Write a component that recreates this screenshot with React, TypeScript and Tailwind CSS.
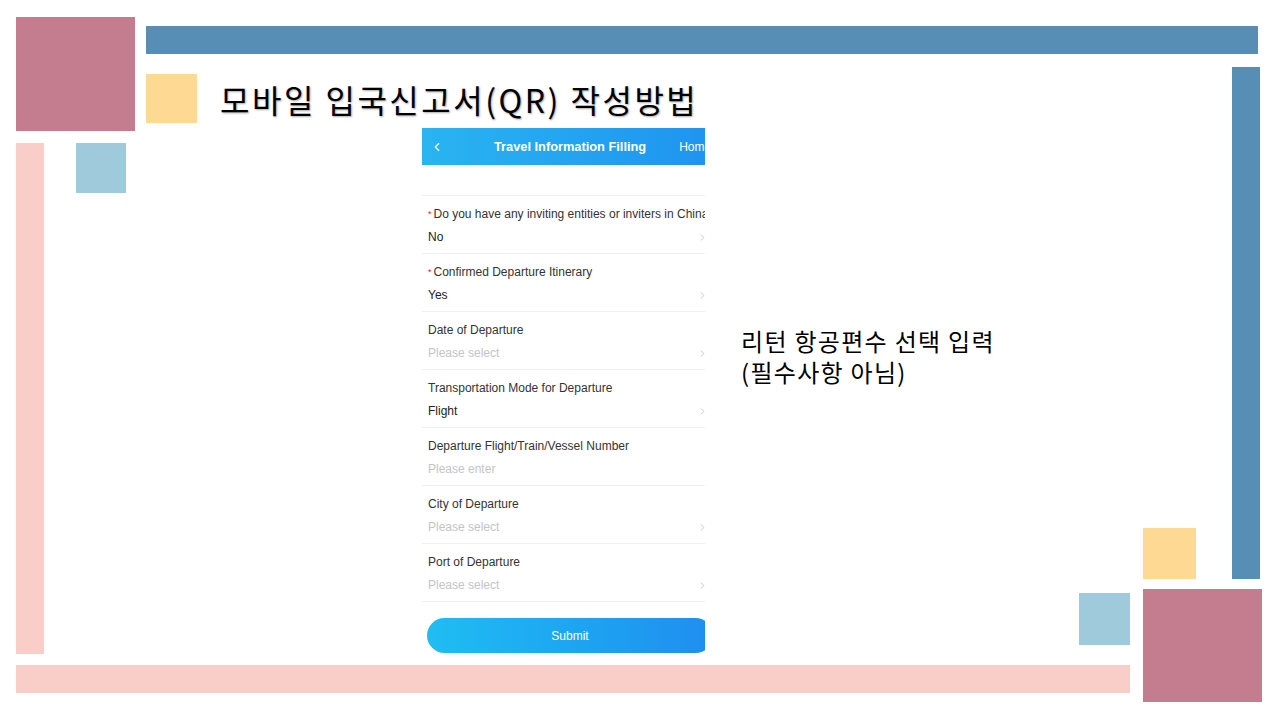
import { ChevronLeft, ChevronRight } from 'lucide-react';

type Field = {
  label: string;
  value: string;
  required?: boolean;
  placeholder?: boolean;
  arrow?: boolean;
};

const fields: Field[] = [
  { label: 'Do you have any inviting entities or inviters in China', value: 'No', required: true, arrow: true },
  { label: 'Confirmed Departure Itinerary', value: 'Yes', required: true, arrow: true },
  { label: 'Date of Departure', value: 'Please select', placeholder: true, arrow: true },
  { label: 'Transportation Mode for Departure', value: 'Flight', arrow: true },
  { label: 'Departure Flight/Train/Vessel Number', value: 'Please enter', placeholder: true },
  { label: 'City of Departure', value: 'Please select', placeholder: true, arrow: true },
  { label: 'Port of Departure', value: 'Please select', placeholder: true, arrow: true },
];

function FormRow({ field }: { field: Field }) {
  return (
    <div className="flex h-[58px] flex-col gap-[9px] border-b border-[#f0f0f0] pl-[6px] pt-[11px]">
      <div className="flex h-[14px] items-center text-[12px] leading-[14px] text-[#333]">
        {field.required && <span className="mr-[2px] text-[9px] text-[#e02020]">*</span>}
        <span className="whitespace-nowrap">{field.label}</span>
      </div>
      <div className="flex h-[14px] items-center justify-between pr-[10px] text-[12px] leading-[14px]">
        <span className={field.placeholder ? 'text-[#c4c4c4]' : 'text-[#222]'}>{field.value}</span>
        {field.arrow && <ChevronRight className="h-[11px] w-[11px] text-[#b0b0b0]" strokeWidth={1.5} />}
      </div>
    </div>
  );
}

function PhoneScreen() {
  return (
    <div className="h-[527px] w-[283px] shrink-0 overflow-hidden bg-white font-['Liberation_Sans',Arial,sans-serif]">
      <div className="flex w-[296px] flex-col">
        <div className="flex h-[37px] items-center bg-gradient-to-r from-[#2ab4f1] to-[#1f93f0] pl-[8px] text-white">
          <ChevronLeft className="h-[14px] w-[14px]" strokeWidth={2} />
          <span className="ml-[50px] text-[12.8px] font-bold">Travel Information Filling</span>
          <span className="ml-[33px] text-[12px]">Home</span>
        </div>
        <div className="h-[31px] border-b border-[#f0f0f0]" />
        {fields.map((f) => (
          <FormRow key={f.label} field={f} />
        ))}
        <div className="pl-[5px] pt-[16px]">
          <button className="h-[35px] w-[286px] rounded-full bg-gradient-to-r from-[#20bdf2] to-[#1f8ef0] text-[12px] text-white">
            Submit
          </button>
        </div>
      </div>
    </div>
  );
}

export default function App() {
  return (
    <div className="relative h-[720px] w-[1280px] overflow-hidden bg-white font-['Noto_Sans_CJK_KR',sans-serif]">
      {/* slide decoration blocks */}
      <div className="absolute left-[16px] top-[17px] h-[114px] w-[119px] bg-[#c47d8e]" />
      <div className="absolute left-[146px] top-[26px] h-[28px] w-[1112px] bg-[#578eb5]" />
      <div className="absolute left-[16px] top-[143px] h-[511px] w-[28px] bg-[#f9cec8]" />
      <div className="absolute left-[76px] top-[143px] h-[50px] w-[50px] bg-[#9fcadb]" />
      <div className="absolute left-[1232px] top-[67px] h-[512px] w-[28px] bg-[#578eb5]" />
      <div className="absolute left-[1143px] top-[528px] h-[51px] w-[53px] bg-[#fed994]" />
      <div className="absolute left-[1079px] top-[593px] h-[52px] w-[51px] bg-[#9fcadb]" />
      <div className="absolute left-[1143px] top-[589px] h-[113px] w-[119px] bg-[#c47d8e]" />
      <div className="absolute left-[16px] top-[665px] h-[28px] w-[1114px] bg-[#f9cec8]" />

      <div className="relative flex flex-col pl-[146px] pt-[74px]">
        <div className="flex items-center gap-[23px]">
          <div className="h-[49px] w-[51px] bg-[#fed994]" />
          <h1 className="whitespace-nowrap text-[32px] font-normal leading-[40px] tracking-[2.5px] text-black [text-shadow:1px_1px_2px_rgba(0,0,0,0.35)]">
            모바일 입국신고서(QR) 작성방법
          </h1>
        </div>

        <div className="mt-[5px] flex items-start gap-[36px] pl-[276px]">
          <PhoneScreen />
          <p className="mt-[197px] text-[24px] leading-[31px] tracking-[1.3px] text-black">
            리턴 항공편수 선택 입력
            <br />
            (필수사항 아님)
          </p>
        </div>
      </div>
    </div>
  );
}
